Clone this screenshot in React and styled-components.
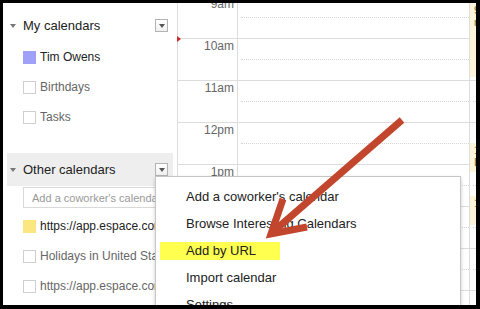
import styled, { createGlobalStyle } from 'styled-components';

const GlobalStyle = createGlobalStyle`
  html, body {
    margin: 0;
    padding: 0;
    background: #000;
  }
  * {
    box-sizing: border-box;
  }
  body {
    font-family: 'Liberation Sans', Arial, sans-serif;
  }
`;

const Frame = styled.div`
  position: relative;
  display: flex;
  width: 480px;
  height: 309px;
  overflow: hidden;
  background: #fff;
  border-style: solid;
  border-color: #000;
  border-width: 3px 4px 4px 3px;
`;

const Sidebar = styled.div`
  width: 174px;
  flex-shrink: 0;
  padding-top: 6px;
  overflow: hidden;
`;

const SectionHeader = styled.div`
  display: flex;
  align-items: center;
  height: 33px;
  margin: ${({ $gap }) => $gap || 0}px 4px 0 4px;
  padding: 0 5px 0 3px;
  background: ${({ $active }) => ($active ? '#eeeeee' : 'transparent')};
`;

const Caret = styled.span`
  width: 0;
  height: 0;
  border-left: 3px solid transparent;
  border-right: 3px solid transparent;
  border-top: 4px solid #777;
  margin-right: 7px;
  margin-top: 1px;
`;

const HeaderTitle = styled.div`
  flex: 1;
  font-size: 13px;
  color: #222;
  white-space: nowrap;
`;

const DropButton = styled.div`
  width: 13px;
  height: 13px;
  border: 1px solid #b3b3b3;
  background: linear-gradient(#fff, #f0f0f0);
  display: flex;
  align-items: center;
  justify-content: center;

  &::after {
    content: '';
    width: 0;
    height: 0;
    margin-top: 1px;
    border-left: 3.5px solid transparent;
    border-right: 3.5px solid transparent;
    border-top: 4px solid #555;
  }
`;

const List = styled.div`
  margin-top: ${({ $gap }) => $gap || 0}px;
`;

const Item = styled.div`
  display: flex;
  align-items: center;
  height: 30px;
  padding-left: 20px;
`;

const Swatch = styled.span`
  width: 13px;
  height: 13px;
  flex-shrink: 0;
  margin-right: 4px;
  background: ${({ $color }) => $color || '#fff'};
  border: ${({ $color }) => ($color ? 'none' : '1px solid #cfcfcf')};
`;

const ItemLabel = styled.span`
  font-size: 12px;
  color: ${({ $muted }) => ($muted ? '#666' : '#222')};
  white-space: nowrap;
`;

const CoworkerInput = styled.input`
  display: block;
  margin: 1px 0 0 20px;
  width: 147px;
  height: 21px;
  padding: 0 8px;
  border: 1px solid #d9d9d9;
  font-family: 'Liberation Sans', Arial, sans-serif;
  font-size: 11px;
  color: #222;
  outline: none;

  &::placeholder {
    color: #999;
  }
`;

const Grid = styled.div`
  flex: 1;
  display: flex;
  overflow: hidden;
  border-left: 1px solid #ddd;
`;

const Column = styled.div`
  position: relative;
  width: ${({ $width }) => ($width ? `${$width}px` : 'auto')};
  flex: ${({ $width }) => ($width ? '0 0 auto' : '1')};
  border-right: ${({ $edge }) => ($edge ? '1px solid #ddd' : 'none')};
  overflow: hidden;
`;

const Rows = styled.div`
  margin-top: -7px;
`;

const HourLabel = styled.div`
  height: 42px;
  border-top: 1px solid #ddd;
  padding-right: 3px;
  text-align: right;
  font-size: 12px;
  line-height: 14px;
  color: #666;
`;

const HourSlot = styled.div`
  height: 42px;
  border-top: 1px solid #ddd;
`;

const HalfLine = styled.div`
  margin: 20px 0 0 3px;
  border-top: 1px dotted #d6d6d6;
`;

const Event = styled.div`
  position: absolute;
  left: 0;
  width: 60px;
  padding: 1px 0 0 4px;
  background: #fdf5d9;
  font-size: 11px;
  line-height: 12px;
  color: #8a6a2a;
  overflow: hidden;
`;

const NowMarker = styled.div`
  position: absolute;
  left: 174px;
  top: 33px;
  width: 0;
  height: 0;
  border-top: 3px solid transparent;
  border-bottom: 3px solid transparent;
  border-left: 4px solid #cc2b2b;
`;

const Menu = styled.div`
  position: absolute;
  left: 152px;
  top: 173px;
  width: 306px;
  height: 150px;
  padding-top: 6px;
  background: #fff;
  border: 1px solid #c6c6c6;
  box-shadow: 0 2px 4px rgba(0, 0, 0, 0.2);
`;

const MenuItem = styled.div`
  display: flex;
  align-items: center;
  height: 27px;
`;

const MenuLabel = styled.div`
  display: flex;
  align-items: center;
  min-width: 120px;
  height: 18px;
  margin-left: 4px;
  padding-left: 26px;
  font-size: 13px;
  color: #222;
  white-space: nowrap;
  background: ${({ $highlight }) => ($highlight ? '#ffff4f' : 'transparent')};
`;

const Overlay = styled.svg`
  position: absolute;
  left: 0;
  top: 0;
  pointer-events: none;
`;

const hours = ['9am', '10am', '11am', '12pm', '1pm', '2pm', '3pm', '4pm'];

const myCalendars = [
  { name: 'Tim Owens', color: '#9fa0f8' },
  { name: 'Birthdays', muted: true },
  { name: 'Tasks', muted: true },
];

const otherCalendars = [
  { name: 'https://app.espace.com/calendar', color: '#fbe67f' },
  { name: 'Holidays in United States', muted: true },
  { name: 'https://app.espace.com/events', muted: true },
];

const events = [
  { top: 0, height: 74, text: '9:00a Staff meeting' },
  { top: 140, height: 29, text: '12:30p Lunch' },
  { top: 193, height: 29, text: '1:45p Call' },
];

const menuItems = [
  "Add a coworker's calendar",
  'Browse Interesting Calendars',
  'Add by URL',
  'Import calendar',
  'Settings',
];

const CalendarList = ({ items, gap }) => (
  <List $gap={gap}>
    {items.map((cal) => (
      <Item key={cal.name}>
        <Swatch $color={cal.color} />
        <ItemLabel $muted={cal.muted}>{cal.name}</ItemLabel>
      </Item>
    ))}
  </List>
);

const App = () => {
  return (
    <>
      <GlobalStyle />
      <Frame>
        <Sidebar>
          <SectionHeader>
            <Caret />
            <HeaderTitle>My calendars</HeaderTitle>
            <DropButton />
          </SectionHeader>
          <CalendarList items={myCalendars} />

          <SectionHeader $active $gap={21}>
            <Caret />
            <HeaderTitle>Other calendars</HeaderTitle>
            <DropButton />
          </SectionHeader>
          <CoworkerInput placeholder="Add a coworker's calendar" />
          <CalendarList items={otherCalendars} gap={3} />
        </Sidebar>

        <Grid>
          <Column $width={60} $edge>
            <Rows>
              {hours.map((h) => (
                <HourLabel key={h}>{h}</HourLabel>
              ))}
            </Rows>
          </Column>
          <Column $width={232} $edge>
            <Rows>
              {hours.map((h) => (
                <HourSlot key={h}>
                  <HalfLine />
                </HourSlot>
              ))}
            </Rows>
          </Column>
          <Column>
            <Rows>
              {hours.map((h) => (
                <HourSlot key={h}>
                  <HalfLine />
                </HourSlot>
              ))}
            </Rows>
            {events.map((ev) => (
              <Event key={ev.top} style={{ top: ev.top, height: ev.height }}>
                {ev.text}
              </Event>
            ))}
          </Column>
        </Grid>

        <NowMarker />

        <Menu>
          {menuItems.map((label) => (
            <MenuItem key={label}>
              <MenuLabel $highlight={label === 'Add by URL'}>{label}</MenuLabel>
            </MenuItem>
          ))}
        </Menu>

        <Overlay width="473" height="302" viewBox="3 3 473 302">
          <g stroke="#c1462d" strokeWidth="7" fill="none">
            <path d="M402 120 L274 231" />
            <path d="M283 199 L271 234 L307 227" strokeLinejoin="miter" />
          </g>
        </Overlay>
      </Frame>
    </>
  );
};

export default App;
